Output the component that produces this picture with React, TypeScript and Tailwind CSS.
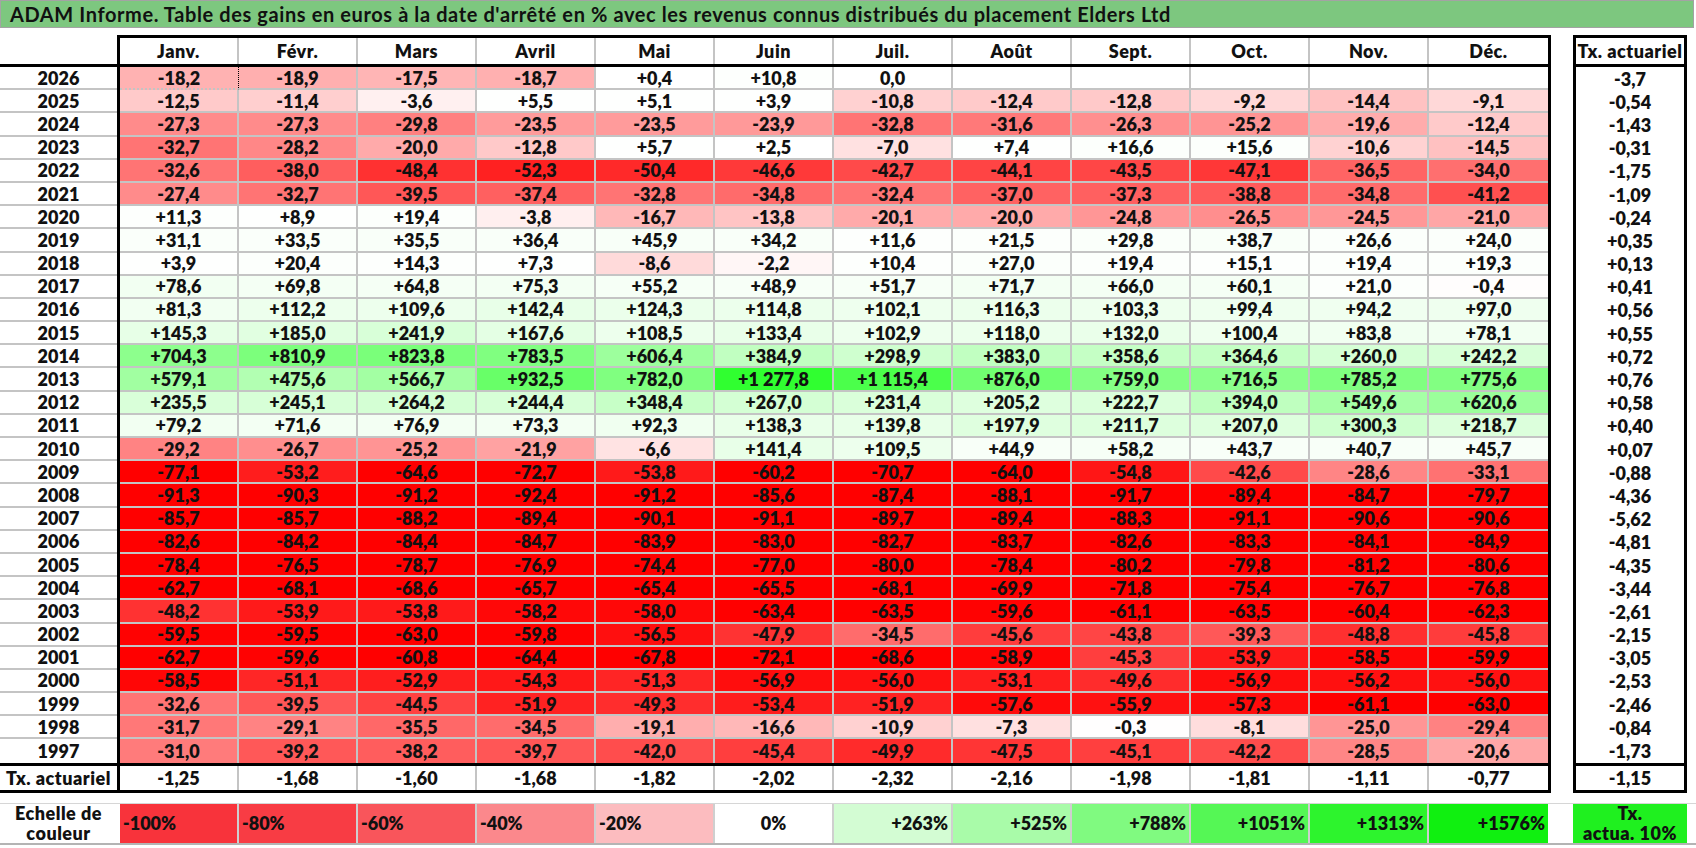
const months = ["Janv.", "Févr.", "Mars", "Avril", "Mai", "Juin", "Juil.", "Août", "Sept.", "Oct.", "Nov.", "Déc."];

// year, 12 monthly values, taux actuariel
const rows: [string, string[], string][] = [
  ["2026", ["-18,2", "-18,9", "-17,5", "-18,7", "+0,4", "+10,8", "0,0", "", "", "", "", ""], "-3,7"],
  ["2025", ["-12,5", "-11,4", "-3,6", "+5,5", "+5,1", "+3,9", "-10,8", "-12,4", "-12,8", "-9,2", "-14,4", "-9,1"], "-0,54"],
  ["2024", ["-27,3", "-27,3", "-29,8", "-23,5", "-23,5", "-23,9", "-32,8", "-31,6", "-26,3", "-25,2", "-19,6", "-12,4"], "-1,43"],
  ["2023", ["-32,7", "-28,2", "-20,0", "-12,8", "+5,7", "+2,5", "-7,0", "+7,4", "+16,6", "+15,6", "-10,6", "-14,5"], "-0,31"],
  ["2022", ["-32,6", "-38,0", "-48,4", "-52,3", "-50,4", "-46,6", "-42,7", "-44,1", "-43,5", "-47,1", "-36,5", "-34,0"], "-1,75"],
  ["2021", ["-27,4", "-32,7", "-39,5", "-37,4", "-32,8", "-34,8", "-32,4", "-37,0", "-37,3", "-38,8", "-34,8", "-41,2"], "-1,09"],
  ["2020", ["+11,3", "+8,9", "+19,4", "-3,8", "-16,7", "-13,8", "-20,1", "-20,0", "-24,8", "-26,5", "-24,5", "-21,0"], "-0,24"],
  ["2019", ["+31,1", "+33,5", "+35,5", "+36,4", "+45,9", "+34,2", "+11,6", "+21,5", "+29,8", "+38,7", "+26,6", "+24,0"], "+0,35"],
  ["2018", ["+3,9", "+20,4", "+14,3", "+7,3", "-8,6", "-2,2", "+10,4", "+27,0", "+19,4", "+15,1", "+19,4", "+19,3"], "+0,13"],
  ["2017", ["+78,6", "+69,8", "+64,8", "+75,3", "+55,2", "+48,9", "+51,7", "+71,7", "+66,0", "+60,1", "+21,0", "-0,4"], "+0,41"],
  ["2016", ["+81,3", "+112,2", "+109,6", "+142,4", "+124,3", "+114,8", "+102,1", "+116,3", "+103,3", "+99,4", "+94,2", "+97,0"], "+0,56"],
  ["2015", ["+145,3", "+185,0", "+241,9", "+167,6", "+108,5", "+133,4", "+102,9", "+118,0", "+132,0", "+100,4", "+83,8", "+78,1"], "+0,55"],
  ["2014", ["+704,3", "+810,9", "+823,8", "+783,5", "+606,4", "+384,9", "+298,9", "+383,0", "+358,6", "+364,6", "+260,0", "+242,2"], "+0,72"],
  ["2013", ["+579,1", "+475,6", "+566,7", "+932,5", "+782,0", "+1 277,8", "+1 115,4", "+876,0", "+759,0", "+716,5", "+785,2", "+775,6"], "+0,76"],
  ["2012", ["+235,5", "+245,1", "+264,2", "+244,4", "+348,4", "+267,0", "+231,4", "+205,2", "+222,7", "+394,0", "+549,6", "+620,6"], "+0,58"],
  ["2011", ["+79,2", "+71,6", "+76,9", "+73,3", "+92,3", "+138,3", "+139,8", "+197,9", "+211,7", "+207,0", "+300,3", "+218,7"], "+0,40"],
  ["2010", ["-29,2", "-26,7", "-25,2", "-21,9", "-6,6", "+141,4", "+109,5", "+44,9", "+58,2", "+43,7", "+40,7", "+45,7"], "+0,07"],
  ["2009", ["-77,1", "-53,2", "-64,6", "-72,7", "-53,8", "-60,2", "-70,7", "-64,0", "-54,8", "-42,6", "-28,6", "-33,1"], "-0,88"],
  ["2008", ["-91,3", "-90,3", "-91,2", "-92,4", "-91,2", "-85,6", "-87,4", "-88,1", "-91,7", "-89,4", "-84,7", "-79,7"], "-4,36"],
  ["2007", ["-85,7", "-85,7", "-88,2", "-89,4", "-90,1", "-91,1", "-89,7", "-89,4", "-88,3", "-91,1", "-90,6", "-90,6"], "-5,62"],
  ["2006", ["-82,6", "-84,2", "-84,4", "-84,7", "-83,9", "-83,0", "-82,7", "-83,7", "-82,6", "-83,3", "-84,1", "-84,9"], "-4,81"],
  ["2005", ["-78,4", "-76,5", "-78,7", "-76,9", "-74,4", "-77,0", "-80,0", "-78,4", "-80,2", "-79,8", "-81,2", "-80,6"], "-4,35"],
  ["2004", ["-62,7", "-68,1", "-68,6", "-65,7", "-65,4", "-65,5", "-68,1", "-69,9", "-71,8", "-75,4", "-76,7", "-76,8"], "-3,44"],
  ["2003", ["-48,2", "-53,9", "-53,8", "-58,2", "-58,0", "-63,4", "-63,5", "-59,6", "-61,1", "-63,5", "-60,4", "-62,3"], "-2,61"],
  ["2002", ["-59,5", "-59,5", "-63,0", "-59,8", "-56,5", "-47,9", "-34,5", "-45,6", "-43,8", "-39,3", "-48,8", "-45,8"], "-2,15"],
  ["2001", ["-62,7", "-59,6", "-60,8", "-64,4", "-67,8", "-72,1", "-68,6", "-58,9", "-45,3", "-53,9", "-58,5", "-59,9"], "-3,05"],
  ["2000", ["-58,5", "-51,1", "-52,9", "-54,3", "-51,3", "-56,9", "-56,0", "-53,1", "-49,6", "-56,9", "-56,2", "-56,0"], "-2,53"],
  ["1999", ["-32,6", "-39,5", "-44,5", "-51,9", "-49,3", "-53,4", "-51,9", "-57,6", "-55,9", "-57,3", "-61,1", "-63,0"], "-2,46"],
  ["1998", ["-31,7", "-29,1", "-35,5", "-34,5", "-19,1", "-16,6", "-10,9", "-7,3", "-0,3", "-8,1", "-25,0", "-29,4"], "-0,84"],
  ["1997", ["-31,0", "-39,2", "-38,2", "-39,7", "-42,0", "-45,4", "-49,9", "-47,5", "-45,1", "-42,2", "-28,5", "-20,6"], "-1,73"],
];

const txRow = ["-1,25", "-1,68", "-1,60", "-1,68", "-1,82", "-2,02", "-2,32", "-2,16", "-1,98", "-1,81", "-1,11", "-0,77"];

const legend = [
  { label: "-100%", bg: "bg-[#f8333b]", align: "justify-start pl-[3px]" },
  { label: "-80%", bg: "bg-[#f83c44]", align: "justify-start pl-[3px]" },
  { label: "-60%", bg: "bg-[#f9555b]", align: "justify-start pl-[3px]" },
  { label: "-40%", bg: "bg-[#fb888c]", align: "justify-start pl-[3px]" },
  { label: "-20%", bg: "bg-[#fcbcbf]", align: "justify-start pl-[3px]" },
  { label: "0%", bg: "bg-white", align: "justify-center" },
  { label: "+263%", bg: "bg-[#d3fcd3]", align: "justify-end pr-[3px]" },
  { label: "+525%", bg: "bg-[#a9fba9]", align: "justify-end pr-[3px]" },
  { label: "+788%", bg: "bg-[#80fa80]", align: "justify-end pr-[3px]" },
  { label: "+1051%", bg: "bg-[#55f755]", align: "justify-end pr-[3px]" },
  { label: "+1313%", bg: "bg-[#2df42d]", align: "justify-end pr-[3px]" },
  { label: "+1576%", bg: "bg-[#10f010]", align: "justify-end pr-[3px]" },
];

// excel-like colour scale: red saturates at -60, green at +1576
function cellColor(v: string) {
  if (!v) return "#ffffff";
  const n = parseFloat(v.replace(/\s/g, "").replace(",", "."));
  if (n < 0) {
    const f = Math.min(1, -n / 60);
    const c = Math.round(255 * (1 - f));
    return `rgb(255,${c},${c})`;
  }
  const f = Math.min(1, n / 1576);
  const c = Math.round(255 * (1 - f));
  return `rgb(${c},255,${c})`;
}

const label = "text-[18px] tracking-[0.5px]";

export default function App() {
  return (
    <div className="w-[1696px] h-[848px] bg-white text-[#111] font-['Lato','Liberation_Sans',sans-serif] font-extrabold overflow-hidden">
      <div className="h-[28px] w-[1694px] bg-[#7dc77f] border border-[#a3a3a3] flex items-center pl-[9px] text-[20px] tracking-[0.6px] font-bold">
        ADAM Informe. Table des gains en euros à la date d'arrêté en % avec les revenus connus distribués du placement Elders Ltd
      </div>

      <div className="mt-[7px] text-[18px] leading-none">
        {/* header */}
        <div className="flex h-[32px]">
          <div className="w-[117px] border-b-[3px] border-black" />
          <div className="flex border-[3px] border-black">
            {months.map((m, i) => (
              <div
                key={m}
                className={`w-[119px] flex items-center justify-center ${label} ${i < 11 ? "border-r-2 border-[#c4c4c4]" : ""}`}
              >
                {m}
              </div>
            ))}
          </div>
          <div className="w-[22px]" />
          <div className={`w-[114px] border-[3px] border-black flex items-center justify-center ${label}`}>Tx. actuariel</div>
        </div>

        {/* data rows */}
        {rows.map(([year, vals, tx], r) => (
          <div key={year} className="flex h-[23.2px]">
            <div className={`w-[117px] flex items-center justify-center ${r < rows.length - 1 ? "border-b-2 border-[#c4c4c4]" : ""}`}>
              {year}
            </div>
            <div className="flex border-x-[3px] border-black">
              {vals.map((v, i) => (
                <div
                  key={i}
                  style={{ backgroundColor: cellColor(v) }}
                  className={`w-[119px] flex items-center justify-center ${
                    i < 11 ? (r === 0 && i === 0 ? "border-r border-dotted border-black" : "border-r-2 border-[#c4c4c4]") : ""
                  } ${r < rows.length - 1 ? "border-b-2 border-b-[#c4c4c4]" : ""}`}
                >
                  {v}
                </div>
              ))}
            </div>
            <div className="w-[22px]" />
            <div className="w-[114px] border-x-[3px] border-black flex items-center justify-center">{tx}</div>
          </div>
        ))}

        {/* thick separator */}
        <div className="flex h-[3px]">
          <div className="w-[1551px] bg-black" />
          <div className="w-[22px]" />
          <div className="w-[114px] bg-black" />
        </div>

        {/* taux actuariel row */}
        <div className="flex h-[27px]">
          <div className={`w-[117px] border-b-[3px] border-black flex items-center justify-center ${label}`}>Tx. actuariel</div>
          <div className="flex border-x-[3px] border-b-[3px] border-black">
            {txRow.map((v, i) => (
              <div key={i} className={`w-[119px] flex items-center justify-center ${i < 11 ? "border-r-2 border-[#c4c4c4]" : ""}`}>
                {v}
              </div>
            ))}
          </div>
          <div className="w-[22px]" />
          <div className="w-[114px] border-x-[3px] border-b-[3px] border-black flex items-center justify-center">-1,15</div>
        </div>

        {/* colour scale */}
        <div className="mt-[10px] flex h-[42px] border-t border-b-2 border-t-[#d6d6d6] border-b-[#b4b4b4]">
          <div className={`w-[117px] flex flex-col items-center justify-center leading-[20px] ${label}`}>
            <span>Echelle de</span>
            <span>couleur</span>
          </div>
          <div className="flex px-[3px]">
            {legend.map((l, i) => (
              <div
                key={l.label}
                className={`w-[119px] flex items-center ${l.bg} ${l.align} ${i < 11 ? "border-r-2 border-[#cfcfcf]" : ""}`}
              >
                {l.label}
              </div>
            ))}
          </div>
          <div className="w-[22px]" />
          <div className={`w-[114px] bg-[#1ff01f] flex flex-col items-center justify-center leading-[20px] ${label}`}>
            <span>Tx.</span>
            <span>actua. 10%</span>
          </div>
        </div>
      </div>
    </div>
  );
}
